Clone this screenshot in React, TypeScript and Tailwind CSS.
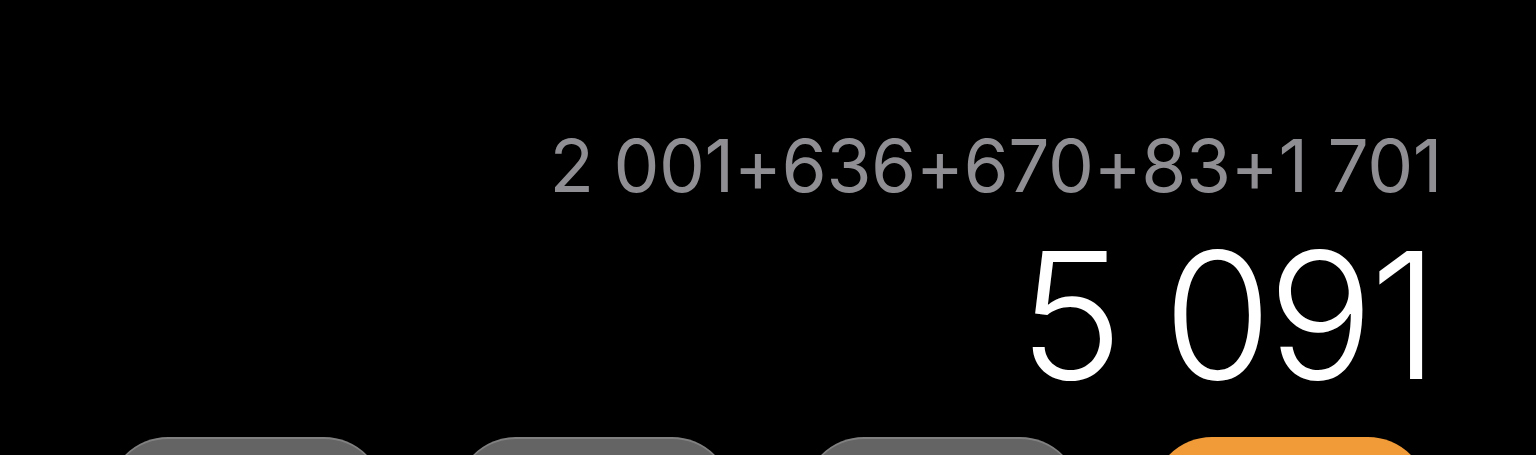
import React from "react";

export default function App() {
  const font = { fontFamily: "Inter, 'Noto Sans', sans-serif" };
  return (
    <div className="h-[455px] w-full overflow-hidden bg-black" style={font}>
      <div className="flex flex-col items-end pt-[129px]">
        <div className="mr-[94px] text-[73px] leading-none font-normal text-[#8e8e93] tracking-[-0.5px] whitespace-nowrap">
          2<span className="inline-block w-[20px]"></span>001+636+670+83+1<span className="inline-block w-[20px]"></span>701
        </div>
        <div className="mr-[101px] mt-[25px] text-[176px] leading-none font-light text-white tracking-[-4px] whitespace-nowrap">
          5<span className="inline-block w-[44px]"></span>091
        </div>
      </div>
      <div className="mt-[34px] flex gap-[72px] px-[108px]">
        <div className="h-[276px] flex-1 rounded-[60px] bg-[#646464] shadow-[inset_0_2px_0_rgba(255,255,255,0.18)]" />
        <div className="h-[276px] flex-1 rounded-[60px] bg-[#646464] shadow-[inset_0_2px_0_rgba(255,255,255,0.18)]" />
        <div className="h-[276px] flex-1 rounded-[60px] bg-[#646464] shadow-[inset_0_2px_0_rgba(255,255,255,0.18)]" />
        <div className="h-[276px] flex-1 rounded-[60px] bg-[#f09a38]" />
      </div>
    </div>
  );
}
